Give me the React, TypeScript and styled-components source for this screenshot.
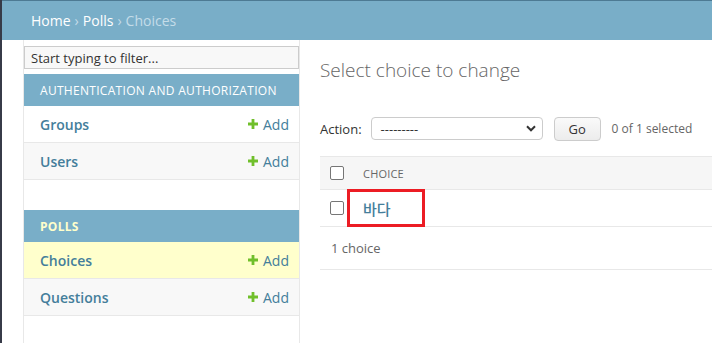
import styled, { createGlobalStyle } from "styled-components";

const GlobalStyle = createGlobalStyle`
  html, body {
    margin: 0;
    padding: 0;
    background: #fff;
  }
  body {
    font-family: "Open Sans", "Noto Sans CJK KR", sans-serif;
    font-size: 14px;
    color: #333;
    border-left: 2px solid #373b48;
    height: 343px;
    overflow: hidden;
    box-sizing: border-box;
  }
`;

const LINK = "#447e9b";
const BLUE = "#79aec8";
const HAIRLINE = "#e8e8e8";

const Header = styled.div`
  height: 39px;
  background: ${BLUE};
  border-top: 1px solid #4d7a93;
  display: flex;
  align-items: center;
  padding-left: 29px;
  color: #c4dce8;
  font-size: 14px;
`;

const Crumb = styled.a<{ current?: boolean }>`
  color: ${(p) => (p.current ? "#c4dce8" : "#fff")};
  text-decoration: none;
`;

const Sep = styled.span`
  margin: 0 4px;
  color: #c4dce8;
`;

const Body = styled.div`
  display: flex;
  height: 303px;
`;

const Toggle = styled.div`
  flex: 0 0 21px;
  border-right: 1px solid ${HAIRLINE};
`;

const Sidebar = styled.nav`
  flex: 0 0 275px;
  border-right: 1px solid ${HAIRLINE};
`;

const Filter = styled.input`
  display: block;
  box-sizing: border-box;
  width: 100%;
  height: 23px;
  margin: 6px 0 5px;
  padding: 2px 6px;
  border: 1px solid #ccc;
  background: #f8f8f8;
  font-family: inherit;
  font-size: 13px;
  color: #333;
  &::placeholder {
    color: #333;
  }
`;

const Module = styled.div`
  margin-bottom: 30px;
`;

const Caption = styled.div<{ current?: boolean }>`
  height: 32px;
  box-sizing: border-box;
  display: flex;
  align-items: center;
  padding-left: 16px;
  background: ${BLUE};
  color: ${(p) => (p.current ? "#ffc" : "#fff")};
  font-size: 12px;
  font-weight: ${(p) => (p.current ? 700 : 400)};
  letter-spacing: 0.3px;
  text-transform: uppercase;
`;

const ModelRow = styled.div<{ alt?: boolean; current?: boolean }>`
  height: 37px;
  box-sizing: border-box;
  display: flex;
  align-items: center;
  justify-content: space-between;
  padding: 0 10px 0 16px;
  border-bottom: 1px solid ${HAIRLINE};
  background: ${(p) => (p.current ? "#ffc" : p.alt ? "#f8f8f8" : "#fff")};
`;

const ModelLink = styled.a`
  color: ${LINK};
  font-weight: 600;
  font-size: 14px;
  text-decoration: none;
`;

const AddLink = styled.a`
  display: flex;
  align-items: center;
  gap: 5px;
  color: ${LINK};
  font-size: 14px;
  text-decoration: none;
`;

const Main = styled.main`
  flex: 1;
  padding: 17px 0 0 20px;
  min-width: 0;
`;

const Title = styled.h1`
  margin: 0 0 34px;
  font-size: 19px;
  font-weight: 300;
  color: #666;
  line-height: 26px;
`;

const Actions = styled.div`
  display: flex;
  align-items: center;
  height: 23px;
  margin-bottom: 16px;
  font-size: 13px;
  color: #333;
`;

const Select = styled.div`
  margin-left: 9px;
  width: 172px;
  height: 23px;
  box-sizing: border-box;
  border: 1px solid #ccc;
  border-radius: 4px;
  display: flex;
  align-items: center;
  justify-content: space-between;
  padding: 0 6px 0 9px;
  font-size: 13px;
  color: #333;
`;

const GoButton = styled.button`
  margin-left: 11px;
  width: 47px;
  height: 24px;
  border: 1px solid #ccc;
  border-radius: 4px;
  background: linear-gradient(#fafafa, #ececec);
  font-family: inherit;
  font-size: 13px;
  color: #333;
  padding: 0;
`;

const Counter = styled.span`
  margin-left: 11px;
  font-size: 12px;
  color: #666;
`;

const Table = styled.div`
  border-top: 1px solid ${HAIRLINE};
`;

const Row = styled.div<{ head?: boolean }>`
  display: flex;
  align-items: center;
  height: ${(p) => (p.head ? 33 : 37)}px;
  box-sizing: border-box;
  background: ${(p) => (p.head ? "#f6f6f6" : "#fff")};
  border-bottom: 1px solid ${HAIRLINE};
`;

const CheckCell = styled.div`
  flex: 0 0 35px;
  box-sizing: border-box;
  padding-left: 10px;
  display: flex;
  align-items: center;
`;

const Check = styled.span`
  width: 12px;
  height: 12px;
  border: 1px solid #767676;
  border-radius: 2px;
  background: #fff;
`;

const HeadCell = styled.div`
  padding-left: 8px;
  font-size: 11px;
  color: #666;
  text-transform: uppercase;
  letter-spacing: 0.2px;
`;

const ChoiceCell = styled.div`
  position: relative;
  padding-left: 8px;
  height: 100%;
  display: flex;
  align-items: center;
`;

const Highlight = styled.span`
  position: absolute;
  left: -8px;
  top: -1px;
  width: 78px;
  height: 38px;
  box-sizing: border-box;
  border: 3px solid #ec1c24;
  pointer-events: none;
`;

const ChoiceLink = styled.a`
  color: ${LINK};
  font-family: "Noto Sans CJK KR", "Open Sans", sans-serif;
  font-weight: 500;
  font-size: 15px;
  text-decoration: none;
`;

const Paginator = styled.div`
  height: 43px;
  box-sizing: border-box;
  display: flex;
  align-items: center;
  padding-left: 11px;
  font-size: 13px;
  color: #666;
  border-bottom: 1px solid ${HAIRLINE};
`;

const Plus = () => (
  <svg width="10" height="10" viewBox="0 0 10 10">
    <path d="M3.6 0h2.8v3.6H10v2.8H6.4V10H3.6V6.4H0V3.6h3.6z" fill="#70bf2b" />
  </svg>
);

const Chevron = () => (
  <svg width="10" height="7" viewBox="0 0 10 7">
    <path d="M1 1.3l4 4 4-4" fill="none" stroke="#333" strokeWidth="2" />
  </svg>
);

const apps = [
  {
    name: "Authentication and Authorization",
    models: ["Groups", "Users"],
  },
  { name: "Polls", models: ["Choices", "Questions"], current: true },
];

export default function App() {
  return (
    <>
      <GlobalStyle />
      <Header>
        <Crumb>Home</Crumb>
        <Sep>›</Sep>
        <Crumb>Polls</Crumb>
        <Sep>›</Sep>
        <Crumb current>Choices</Crumb>
      </Header>
      <Body>
        <Toggle />
        <Sidebar>
          <Filter placeholder="Start typing to filter..." />
          {apps.map((app) => (
            <Module key={app.name}>
              <Caption current={app.current}>{app.name}</Caption>
              {app.models.map((m, i) => (
                <ModelRow
                  key={m}
                  alt={i % 2 === 1}
                  current={app.current && m === "Choices"}
                >
                  <ModelLink>{m}</ModelLink>
                  <AddLink>
                    <Plus />
                    Add
                  </AddLink>
                </ModelRow>
              ))}
            </Module>
          ))}
        </Sidebar>
        <Main>
          <Title>Select choice to change</Title>
          <Actions>
            Action:
            <Select>
              ---------
              <Chevron />
            </Select>
            <GoButton>Go</GoButton>
            <Counter>0 of 1 selected</Counter>
          </Actions>
          <Table>
            <Row head>
              <CheckCell>
                <Check />
              </CheckCell>
              <HeadCell>Choice</HeadCell>
            </Row>
            <Row>
              <CheckCell>
                <Check />
              </CheckCell>
              <ChoiceCell>
                <ChoiceLink>바다</ChoiceLink>
                <Highlight />
              </ChoiceCell>
            </Row>
          </Table>
          <Paginator>1 choice</Paginator>
        </Main>
      </Body>
    </>
  );
}
